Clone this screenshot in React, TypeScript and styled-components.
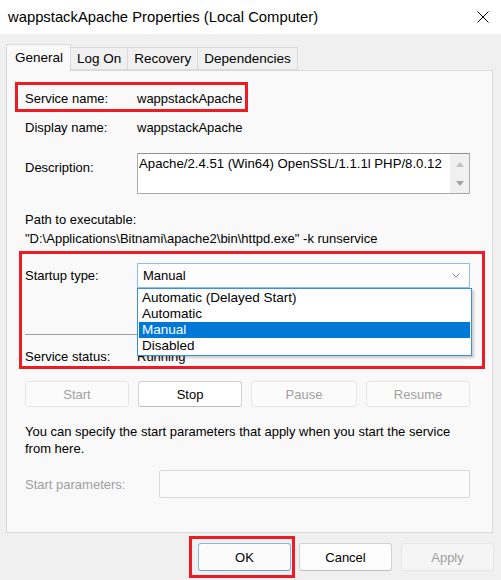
import React from 'react';
import styled, { createGlobalStyle } from 'styled-components';

const GlobalStyle = createGlobalStyle`
    * { box-sizing: border-box; }
    body {
        margin: 0;
        background-color: #F0F0F0;
        font-family: "Liberation Sans", Arial, sans-serif;
        font-size: 13px;
        color: #000000;
    }
`

const Window = styled.div`
    width: 501px;
    height: 580px;
    display: flex;
    flex-direction: column;
    background-color: #F0F0F0;
    overflow: hidden;
`

const TitleBar = styled.div`
    height: 34px;
    display: flex;
    align-items: center;
    justify-content: space-between;
    padding: 0px 12px 0px 8px;
    background-color: #FFFFFF;
`

const Title = styled.span`
    font-size: 14.8px;
    color: #000000;
`

const Body = styled.div`
    display: flex;
    flex-direction: column;
    padding: 10px 8px 0px 6px;
`

const Tabs = styled.nav`
    display: flex;
    align-items: flex-end;
    height: 26px;
`

const Tab = styled.div<{ $active?: boolean }>`
    height: ${p => p.$active ? '27px' : '23px'};
    display: flex;
    align-items: center;
    padding: ${p => p.$active ? '0px 7px 2px 8px' : '0px 6px 0px 6px'};
    background-color: ${p => p.$active ? '#F9F9F9' : '#F0F0F0'};
    border: 1px solid #DADADA;
    border-bottom: ${p => p.$active ? 'none' : '1px solid #DADADA'};
    margin-left: ${p => p.$active ? '0px' : '-1px'};
    margin-bottom: ${p => p.$active ? '-1px' : '0px'};
    position: relative;
    z-index: ${p => p.$active ? 2 : 1};
    font-size: 13.5px;
`

const Panel = styled.div`
    height: 463px;
    display: flex;
    flex-direction: column;
    align-items: flex-start;
    background-color: #F9F9F9;
    border: 1px solid #DADADA;
    padding: 0px 22px 0px 18px;
`

const InfoRow = styled.div<{ $mt?: number; $h?: number }>`
    display: grid;
    grid-template-columns: 112px 1fr;
    align-items: center;
    line-height: 20px;
    height: ${p => p.$h || 20}px;
    margin-top: ${p => p.$mt || 0}px;
    width: 100%;
`

const Highlight = styled.div<{ $width: number }>`
    border: 3px solid #ED1C24;
    width: ${p => p.$width}px;
`

const NameHighlight = styled(Highlight)`
    margin-top: 11px;
    margin-left: -10px;
    padding: 4px 0px 0px 7px;
    height: 30px;
`

const StartupHighlight = styled(Highlight)`
    margin-top: 3px;
    margin-left: -6px;
    padding: 9px 12px 0px 3px;
    height: 118px;
`

const DescriptionRow = styled.div`
    display: grid;
    grid-template-columns: 112px 1fr;
    margin-top: 15px;
    width: 100%;
`

const DescriptionLabel = styled.span`
    padding-top: 5px;
    line-height: 20px;
`

const TextArea = styled.div`
    height: 41px;
    display: flex;
    background-color: #FFFFFF;
    border: 1px solid #ABABAB;
    border-top-color: #8F8F8F;
`

const TextAreaContent = styled.div`
    flex: 1;
    padding: 2px 1px;
    line-height: 16px;
    font-size: 13.2px;
    white-space: nowrap;
`

const ScrollBar = styled.div`
    width: 19px;
    display: flex;
    flex-direction: column;
    align-items: center;
    justify-content: space-between;
    padding: 8px 0px 7px;
    background-color: #F0F0F0;
`

const Arrow = styled.span<{ $down?: boolean }>`
    width: 0px;
    height: 0px;
    border-left: 4px solid transparent;
    border-right: 4px solid transparent;
    ${p => p.$down ? 'border-top: 5px solid #A3A3A3;' : 'border-bottom: 5px solid #C3C3C3;'}
`

const PathText = styled.div<{ $mt?: number }>`
    line-height: 19px;
    margin-top: ${p => p.$mt || 0}px;
    white-space: nowrap;
`

const SelectWrapper = styled.div`
    position: relative;
    height: 25px;
`

const Select = styled.div`
    height: 25px;
    display: flex;
    align-items: center;
    justify-content: space-between;
    padding: 0px 9px 0px 5px;
    background-color: #FDFDFD;
    border: 1px solid #8CC0EE;
`

const Chevron = styled.svg`
    width: 8px;
    height: 5px;
`

const DropdownList = styled.ul`
    position: absolute;
    top: 100%;
    left: 0px;
    width: 335px;
    margin: 0px;
    padding: 1px 1px;
    list-style: none;
    background-color: #FFFFFF;
    border: 1px solid #3D8FDB;
    box-shadow: 2px 2px 2px rgba(0, 0, 0, 0.18);
    z-index: 5;
`

const DropdownItem = styled.li<{ $selected?: boolean }>`
    height: 16px;
    line-height: 16px;
    padding-left: 3px;
    font-size: 13.5px;
    color: ${p => p.$selected ? '#FFFFFF' : '#000000'};
    background-color: ${p => p.$selected ? '#0078D7' : 'transparent'};
`

const Separator = styled.div`
    height: 1px;
    width: 100%;
    margin-top: 46px;
    background-color: #A0A0A0;
`

const StatusRow = styled(InfoRow)`
    line-height: 17px;
`

const ControlButtons = styled.div`
    display: grid;
    grid-template-columns: 104px 104px 106px 104px;
    column-gap: 9px;
    margin-top: 12px;
    width: 100%;
`

const Button = styled.button<{ $disabled?: boolean; $primary?: boolean }>`
    height: 26px;
    border-radius: 3px;
    font-family: "Liberation Sans", Arial, sans-serif;
    font-size: 13px;
    padding: 0px;
    color: ${p => p.$disabled ? '#A0A0A0' : '#000000'};
    background-color: ${p => p.$disabled ? '#FBFBFB' : '#FFFFFF'};
    border: 1px solid ${p => p.$disabled ? '#E6E6E6' : p.$primary ? '#8AB6E0' : '#D2D2D2'};
    border-bottom-color: ${p => p.$disabled ? '#E6E6E6' : p.$primary ? '#6FA0D3' : '#BDBDBD'};
`

const Paragraph = styled.p`
    margin: 16px 0px 0px;
    line-height: 17px;
`

const ParamsRow = styled.div`
    display: grid;
    grid-template-columns: 134px 1fr;
    align-items: center;
    margin-top: 13px;
    width: 100%;
    color: #A0A0A0;
`

const ParamsInput = styled.div`
    height: 28px;
    background-color: #FBFBFB;
    border: 1px solid #D9D9D9;
    border-radius: 2px;
`

const Footer = styled.div`
    display: flex;
    justify-content: flex-end;
    gap: 9px;
    margin-top: 10px;
    margin-right: -1px;
`

const FooterButton = styled(Button)`
    width: 93px;
    height: 28px;
    background-color: ${p => p.$disabled ? '#F5F5F5' : p.$primary ? '#FBFBFB' : '#FDFDFD'};
`

const OkHighlight = styled.div`
    display: flex;
    border: 3px solid #ED1C24;
    padding: 4px 1px 3px 6px;
    margin: -7px -5px -7px 0px;
`

const CloseIcon = () => (
    <svg width="12" height="12" viewBox="0 0 12 12">
        <path d="M0.5 0.5 L11.5 11.5 M11.5 0.5 L0.5 11.5" stroke="#000000" strokeWidth="1" />
    </svg>
)

const startupOptions = ['Automatic (Delayed Start)', 'Automatic', 'Manual', 'Disabled'];

const App = () => {
    return (
        <Window>
            <GlobalStyle />
            <TitleBar>
                <Title>wappstackApache Properties (Local Computer)</Title>
                <CloseIcon />
            </TitleBar>
            <Body>
                <Tabs>
                    <Tab $active>General</Tab>
                    <Tab>Log On</Tab>
                    <Tab>Recovery</Tab>
                    <Tab>Dependencies</Tab>
                </Tabs>
                <Panel>
                    <NameHighlight $width={233}>
                        <InfoRow>
                            <span>Service name:</span>
                            <span>wappstackApache</span>
                        </InfoRow>
                    </NameHighlight>
                    <InfoRow $mt={6}>
                        <span>Display name:</span>
                        <span>wappstackApache</span>
                    </InfoRow>
                    <DescriptionRow>
                        <DescriptionLabel>Description:</DescriptionLabel>
                        <TextArea>
                            <TextAreaContent>Apache/2.4.51 (Win64) OpenSSL/1.1.1l PHP/8.0.12</TextAreaContent>
                            <ScrollBar>
                                <Arrow />
                                <Arrow $down />
                            </ScrollBar>
                        </TextArea>
                    </DescriptionRow>
                    <PathText $mt={16}>Path to executable:</PathText>
                    <PathText>"D:\Applications\Bitnami\apache2\bin\httpd.exe" -k runservice</PathText>
                    <StartupHighlight $width={466}>
                        <InfoRow $h={25}>
                            <span>Startup type:</span>
                            <SelectWrapper>
                                <Select>
                                    <span>Manual</span>
                                    <Chevron viewBox="0 0 8 5">
                                        <path d="M0.5 0.5 L4 4 L7.5 0.5" fill="none" stroke="#8A8A8A" strokeWidth="1" />
                                    </Chevron>
                                </Select>
                                <DropdownList>
                                    {startupOptions.map(option => (
                                        <DropdownItem key={option} $selected={option == 'Manual'}>{option}</DropdownItem>
                                    ))}
                                </DropdownList>
                            </SelectWrapper>
                        </InfoRow>
                        <Separator />
                        <StatusRow $mt={13} $h={17}>
                            <span>Service status:</span>
                            <span>Running</span>
                        </StatusRow>
                    </StartupHighlight>
                    <ControlButtons>
                        <Button $disabled>Start</Button>
                        <Button>Stop</Button>
                        <Button $disabled>Pause</Button>
                        <Button $disabled>Resume</Button>
                    </ControlButtons>
                    <Paragraph>
                        You can specify the start parameters that apply when you start the service<br />from here.
                    </Paragraph>
                    <ParamsRow>
                        <span>Start parameters:</span>
                        <ParamsInput />
                    </ParamsRow>
                </Panel>
                <Footer>
                    <OkHighlight>
                        <FooterButton $primary>OK</FooterButton>
                    </OkHighlight>
                    <FooterButton>Cancel</FooterButton>
                    <FooterButton $disabled>Apply</FooterButton>
                </Footer>
            </Body>
        </Window>
    )
}

export default App;
